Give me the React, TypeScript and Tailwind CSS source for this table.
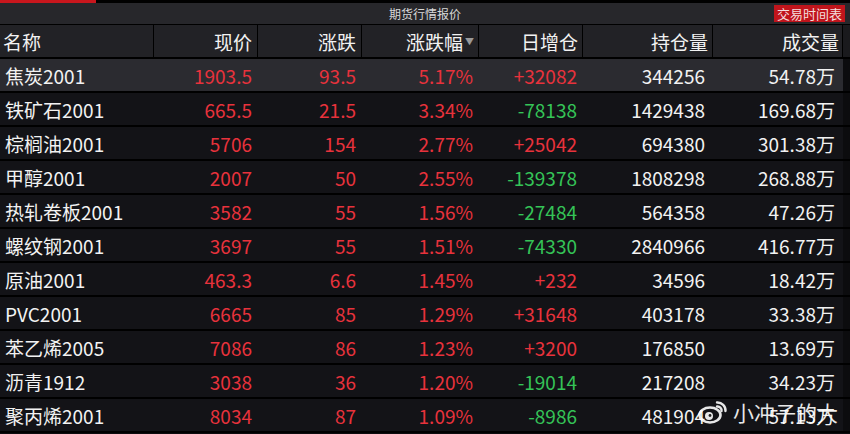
import React from 'react';

type Row = [string, string, string, string, string, string, string];

const rows: Row[] = [
  ['焦炭2001', '1903.5', '93.5', '5.17%', '+32082', '344256', '54.78万'],
  ['铁矿石2001', '665.5', '21.5', '3.34%', '-78138', '1429438', '169.68万'],
  ['棕榈油2001', '5706', '154', '2.77%', '+25042', '694380', '301.38万'],
  ['甲醇2001', '2007', '50', '2.55%', '-139378', '1808298', '268.88万'],
  ['热轧卷板2001', '3582', '55', '1.56%', '-27484', '564358', '47.26万'],
  ['螺纹钢2001', '3697', '55', '1.51%', '-74330', '2840966', '416.77万'],
  ['原油2001', '463.3', '6.6', '1.45%', '+232', '34596', '18.42万'],
  ['PVC2001', '6665', '85', '1.29%', '+31648', '403178', '33.38万'],
  ['苯乙烯2005', '7086', '86', '1.23%', '+3200', '176850', '13.69万'],
  ['沥青1912', '3038', '36', '1.20%', '-19014', '217208', '34.23万'],
  ['聚丙烯2001', '8034', '87', '1.09%', '-8986', '481904', '57.13万'],
];

const cols = 'grid grid-cols-[154px_104px_104px_117px_104px_130px_130px_7px]';

function WeiboLogo() {
  return (
    <svg width="30" height="24" viewBox="0 0 30 24">
      <ellipse cx="12" cy="15" rx="10.5" ry="7.5" fill="none" stroke="#fff" strokeWidth="2.6" />
      <circle cx="11" cy="16" r="4" fill="#fff" />
      <circle cx="12" cy="15.5" r="1.4" fill="#222" />
      <path d="M19 2.5 A8 8 0 0 1 27.5 11" fill="none" stroke="#fff" strokeWidth="2.4" strokeLinecap="round" />
      <path d="M19 6.5 A4 4 0 0 1 23.5 11" fill="none" stroke="#fff" strokeWidth="2.4" strokeLinecap="round" />
    </svg>
  );
}

export default function App() {
  return (
    <div className="relative w-[850px] h-[434px] overflow-hidden bg-[#0c0c0e] text-[#f2f2f2] font-['Noto_Sans_CJK_SC','Noto_Sans',sans-serif]">
      {/* top strip */}
      <div className="h-[3px] bg-black">
        <div className="h-full w-[96px] bg-[#c8161d]" />
      </div>

      {/* title bar */}
      <div className="relative h-[21px] bg-[#27272b] flex items-center justify-center">
        <span className="text-[12px] leading-none text-[#d8d8d8]">期货行情报价</span>
        <span className="absolute right-[5px] top-[2px] h-[17px] px-[3px] bg-[#c0151c] text-[13px] leading-[17px] text-[#f4dede] whitespace-nowrap">交易时间表</span>
      </div>

      {/* header */}
      <div className={`${cols} h-[35px] bg-[#222226] border-t border-b-2 border-black text-[19px] leading-none`}>
        <div className="flex items-center pl-[3px] border-r border-black">名称</div>
        <div className="flex items-center justify-end pr-[5px] border-r border-black">现价</div>
        <div className="flex items-center justify-end pr-[5px] border-r border-black">涨跌</div>
        <div className="flex items-center justify-end pr-[4px] border-r border-black">
          涨跌幅
          <span className="ml-[2px] text-[9px] text-[#9a9a9a]">▼</span>
        </div>
        <div className="flex items-center justify-end pr-[4px] border-r border-black">日增仓</div>
        <div className="flex items-center justify-end pr-[4px] border-r border-black">持仓量</div>
        <div className="flex items-center justify-end pr-[3px] border-r border-black">成交量</div>
        <div className="bg-[#1a1a1d]" />
      </div>

      {/* rows */}
      {rows.map((r, i) => (
        <div
          key={i}
          className={`${cols} h-[34px] border-b-2 border-black text-[19px] leading-none ${i === 0 ? 'bg-[#2b2b30]' : 'bg-[#131317]'}`}
        >
          <div className="flex items-center pl-[5px] text-[#f2f2f2] whitespace-nowrap">{r[0]}</div>
          <div className="flex items-center justify-end pr-[6px] text-[#e8323c]">{r[1]}</div>
          <div className="flex items-center justify-end pr-[6px] text-[#e8323c]">{r[2]}</div>
          <div className="flex items-center justify-end pr-[6px] text-[#e8323c]">{r[3]}</div>
          <div className={`flex items-center justify-end pr-[6px] ${r[4].startsWith('+') ? 'text-[#e8323c]' : 'text-[#35c457]'}`}>{r[4]}</div>
          <div className="flex items-center justify-end pr-[8px] text-[#f2f2f2]">{r[5]}</div>
          <div className="flex items-center justify-end pr-[8px] text-[#f2f2f2]">{r[6]}</div>
          <div className="bg-[#0c0c0e]" />
        </div>
      ))}

      {/* watermark */}
      <div className="absolute left-[698px] top-[400px] flex items-center gap-[5px] opacity-90 whitespace-nowrap">
        <WeiboLogo />
        <span className="text-[21px] leading-none text-white">小冲子的大</span>
      </div>
    </div>
  );
}
